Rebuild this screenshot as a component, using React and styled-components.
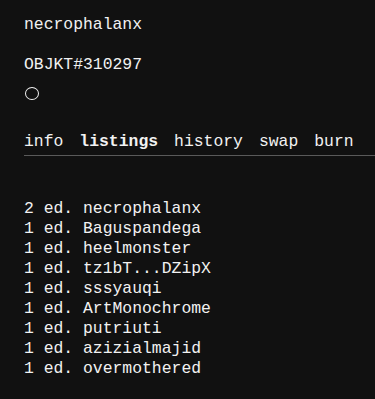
import React from "react";
import styled, { createGlobalStyle } from "styled-components";

const Global = createGlobalStyle`
  html, body { margin: 0; padding: 0; background: #111111; }
  body { font-family: "Liberation Mono", "DejaVu Sans Mono", monospace; color: #f2f2f2; font-size: 16.4px; }
`;

const Page = styled.div`
  padding: 15px 0 0 24px;
  min-height: 399px;
  box-sizing: border-box;
  overflow: hidden;
`;

const Line = styled.div`
  height: 20px;
  line-height: 20px;
  margin-bottom: ${(p) => p.$gap || 0}px;
  white-space: pre;
`;

const Status = styled.div`
  width: 14px;
  height: 13px;
  margin-left: 1px;
  box-sizing: border-box;
  border: 1.7px solid #f2f2f2;
  border-radius: 50%;
`;

const Tabs = styled.nav`
  display: flex;
  gap: 16px;
  margin-top: 32px;
  padding-bottom: 3px;
  border-bottom: 1px solid #5a5a5a;
`;

const Tab = styled.span`
  line-height: 20px;
  font-weight: ${(p) => (p.$active ? 700 : 400)};
`;

const List = styled.div`
  margin-top: 43px;
`;

const tabs = ["info", "listings", "history", "swap", "burn"];
const rows = [
  ["2", "necrophalanx"],
  ["1", "Baguspandega"],
  ["1", "heelmonster"],
  ["1", "tz1bT...DZipX"],
  ["1", "sssyauqi"],
  ["1", "ArtMonochrome"],
  ["1", "putriuti"],
  ["1", "azizialmajid"],
  ["1", "overmothered"],
];

export default function App() {
  return (
    <Page>
      <Global />
      <Line $gap={20}>necrophalanx</Line>
      <Line $gap={12}>OBJKT#310297</Line>
      <Status />
      <Tabs>
        {tabs.map((t) => (
          <Tab key={t} $active={t === "listings"}>{t}</Tab>
        ))}
      </Tabs>
      <List>
        {rows.map(([n, name], i) => (
          <Line key={i}>{`${n} ed. ${name}`}</Line>
        ))}
      </List>
    </Page>
  );
}
